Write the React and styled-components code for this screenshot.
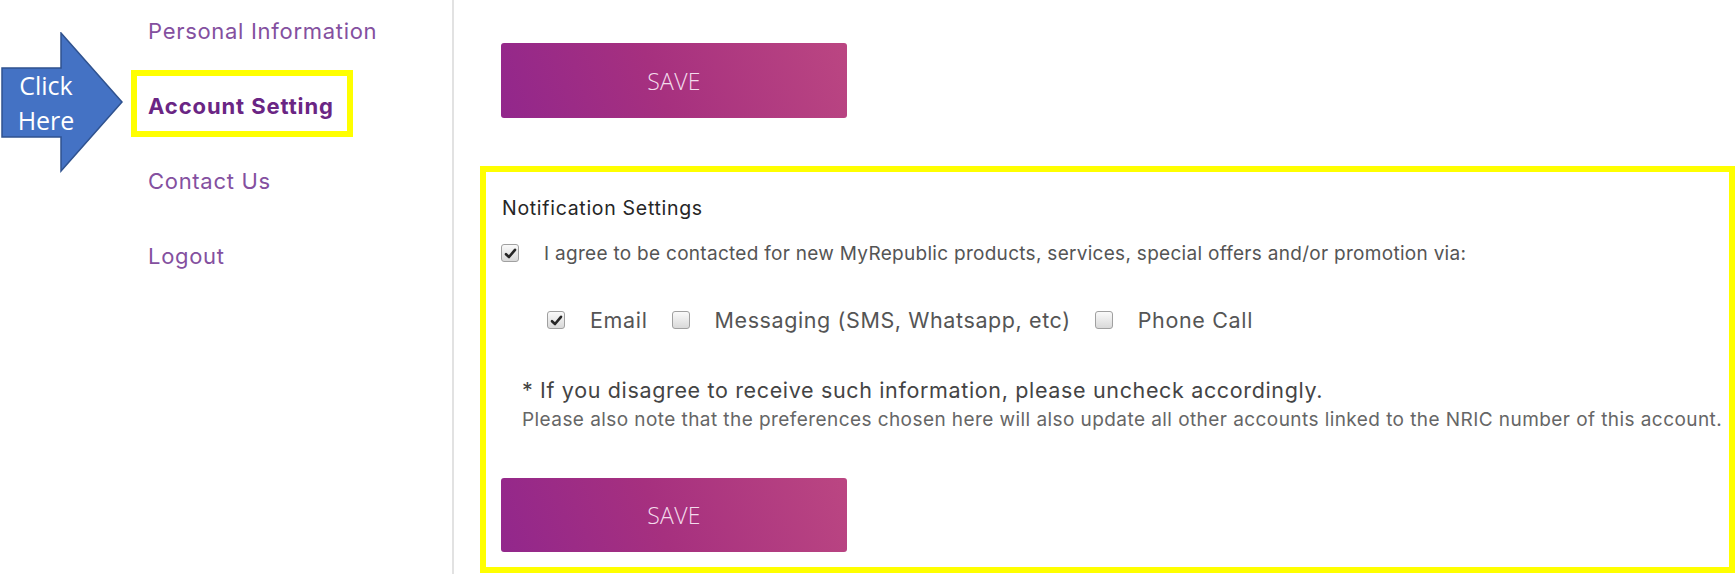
import React from "react";
import styled, { createGlobalStyle } from "styled-components";

const Global = createGlobalStyle`
  html, body { margin: 0; padding: 0; background: #fff; }
  body { width: 1735px; height: 574px; overflow: hidden; font-family: Inter, "Noto Sans", sans-serif; }
  * { box-sizing: border-box; }
`;

const Page = styled.div`
  display: grid;
  grid-template-columns: 454px 1fr;
  height: 574px;
`;

const Sidebar = styled.aside`
  position: relative;
  border-right: 2px solid #e2e2e2;
  padding-left: 131px;
`;

const Nav = styled.nav`
  display: flex;
  flex-direction: column;
  gap: 8px;
  margin-top: -5px;
`;

const NavItem = styled.a`
  display: flex;
  align-items: center;
  width: fit-content;
  height: 67px;
  padding: 4px 13px 0 11px;
  border: 6px solid ${(p) => (p.$highlight ? "#ffff00" : "transparent")};
  font-size: 22px;
  letter-spacing: ${(p) => (p.$active ? 0.9 : 0.7)}px;
  font-weight: ${(p) => (p.$active ? 700 : 400)};
  color: ${(p) => (p.$active ? "#6a2584" : "#84509f")};
  text-decoration: none;
  white-space: nowrap;
`;

const Callout = styled.div`
  position: absolute;
  left: 0;
  top: 32px;
  width: 126px;
  height: 142px;
`;

const CalloutShape = styled.svg`
  position: absolute;
  inset: 0;
`;

const CalloutLabel = styled.div`
  position: relative;
  width: 92px;
  padding-top: 36px;
  text-align: center;
  font-family: "Open Sans", "Noto Sans", sans-serif;
  font-size: 25px;
  line-height: 35px;
  color: #fff;
`;

const Main = styled.main`
  display: flex;
  flex-direction: column;
  align-items: flex-start;
  padding: 43px 0 0 47px;
  gap: 48px;
`;

const SaveButton = styled.button`
  width: 346px;
  height: ${(p) => p.$h || 75}px;
  margin-top: ${(p) => p.$mt || 0}px;
  border: none;
  border-radius: 3px;
  background: linear-gradient(70deg, #92278c 0%, #a6307f 45%, #bb4682 100%);
  color: #f3dcec;
  font-family: "Open Sans", "Noto Sans", sans-serif;
  font-weight: 300;
  font-size: 23px;
  letter-spacing: 0.3px;
  cursor: pointer;
`;

const Highlight = styled.section`
  align-self: stretch;
  margin-left: -21px;
  border: 6px solid #ffff00;
  padding: 24px 0 15px 15px;
  display: flex;
  flex-direction: column;
  align-items: flex-start;
`;

const Heading = styled.h3`
  margin: 0 0 0 1px;
  font-size: 19.5px;
  line-height: 24px;
  font-weight: 400;
  letter-spacing: 0.7px;
  color: #262626;
`;

const Row = styled.div`
  display: flex;
  align-items: center;
  gap: 24px;
  height: 24px;
  margin-top: ${(p) => p.$mt || 0}px;
  padding-left: ${(p) => p.$indent || 0}px;
`;

const Label = styled.label`
  display: flex;
  align-items: center;
  gap: 25px;
  font-size: ${(p) => p.$size || 19}px;
  letter-spacing: ${(p) => p.$ls ?? 0.5}px;
  color: #555;
  white-space: nowrap;
`;

const Box = styled.span`
  width: 18px;
  height: 18px;
  flex: none;
  display: inline-flex;
  align-items: center;
  justify-content: center;
  border: 1px solid #a0a0a0;
  border-radius: 3px;
  background: linear-gradient(#fafafa, #d9d9d9);
`;

const Note = styled.p`
  margin: ${(p) => p.$mt || 0}px 0 0 21px;
  font-size: ${(p) => p.$size}px;
  line-height: ${(p) => p.$lh}px;
  letter-spacing: ${(p) => p.$ls}px;
  color: ${(p) => p.$color};
  white-space: nowrap;
`;

const Check = ({ checked }) => (
  <Box>
    {checked && (
      <svg width="13" height="13" viewBox="0 0 13 13">
        <path d="M2 7.2 L5 10 L11 2.8" fill="none" stroke="#262626" strokeWidth="2.6" strokeLinecap="round" strokeLinejoin="round" />
      </svg>
    )}
  </Box>
);

const Option = ({ checked, size, ls, children }) => (
  <Label $size={size} $ls={ls}>
    <Check checked={checked} />
    {children}
  </Label>
);

export default function App() {
  return (
    <>
      <Global />
      <Page>
        <Sidebar>
          <Callout>
            <CalloutShape width="126" height="142" viewBox="0 0 126 142">
              <polygon
                points="2,36 61,36 61,1 122,70 61,139 61,105 2,105"
                fill="#4472c4"
                stroke="#2f528f"
                strokeWidth="1.5"
              />
            </CalloutShape>
            <CalloutLabel>
              Click
              <br />
              Here
            </CalloutLabel>
          </Callout>
          <Nav>
            <NavItem>Personal Information</NavItem>
            <NavItem $active $highlight>Account Setting</NavItem>
            <NavItem>Contact Us</NavItem>
            <NavItem>Logout</NavItem>
          </Nav>
        </Sidebar>
        <Main>
          <SaveButton>SAVE</SaveButton>
          <Highlight>
            <Heading>Notification Settings</Heading>
            <Row $mt={21}>
              <Option checked size={19} ls={0.29}>
                I agree to be contacted for new MyRepublic products, services, special offers and/or promotion via:
              </Option>
            </Row>
            <Row $mt={43} $indent={46}>
              <Option checked size={21.5} ls={0.65}>Email</Option>
              <Option size={21.5} ls={0.6}>Messaging (SMS, Whatsapp, etc)</Option>
              <Option size={21.5} ls={0.65}>Phone Call</Option>
            </Row>
            <Note $mt={45} $size={21.5} $lh={26} $ls={0.65} $color="#444">
              * If you disagree to receive such information, please uncheck accordingly.
            </Note>
            <Note $mt={6} $size={19} $lh={22} $ls={0.43} $color="#666">
              Please also note that the preferences chosen here will also update all other accounts linked to the NRIC number of this account.
            </Note>
            <SaveButton $h={74} $mt={47}>SAVE</SaveButton>
          </Highlight>
        </Main>
      </Page>
    </>
  );
}
